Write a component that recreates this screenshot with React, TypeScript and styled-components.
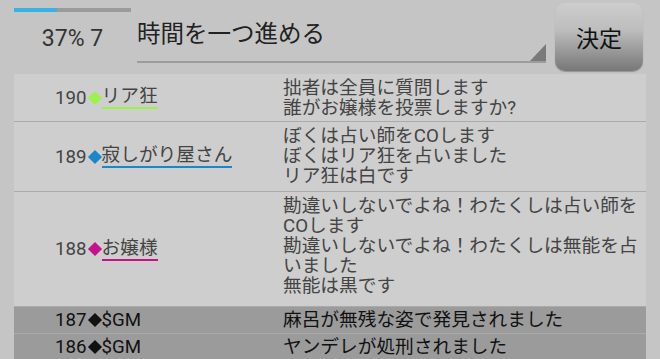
import React from 'react'
import styled, { createGlobalStyle } from 'styled-components'

interface Entry {
  no: number
  name: string
  color?: string
  lines: string[]
  h: number
  gm?: boolean
}

const entries: Entry[] = [
  {
    no: 190,
    name: 'リア狂',
    color: '#9cf24a',
    lines: ['拙者は全員に質問します', '誰がお嬢様を投票しますか?'],
    h: 47,
  },
  {
    no: 189,
    name: '寂しがり屋さん',
    color: '#1b87c9',
    lines: ['ぼくは占い師をCOします', 'ぼくはリア狂を占いました', 'リア狂は白です'],
    h: 70,
  },
  {
    no: 188,
    name: 'お嬢様',
    color: '#c8108a',
    lines: [
      '勘違いしないでよね！わたくしは占い師をCOします',
      '勘違いしないでよね！わたくしは無能を占いました',
      '無能は黒です',
    ],
    h: 115,
  },
  { no: 187, name: '$GM', lines: ['麻呂が無残な姿で発見されました'], h: 27, gm: true },
  { no: 186, name: '$GM', lines: ['ヤンデレが処刑されました'], h: 27, gm: true },
]

const GlobalStyle = createGlobalStyle`
  * { box-sizing: border-box; }
  body {
    margin: 0;
    background: #c5c5c5;
    font-family: Roboto, 'Noto Sans CJK JP', sans-serif;
  }
`

export default function App() {
  return (
    <>
      <GlobalStyle />
      <Screen>
        <Header>
          <Status>
            <Progress>
              <ProgressFill style={{ width: '37%' }} />
            </Progress>
            <StatusText>37% 7</StatusText>
          </Status>
          <Spinner>
            <SpinnerText>時間を一つ進める</SpinnerText>
            <SpinnerCorner />
          </Spinner>
          <DecideButton>決定</DecideButton>
        </Header>

        <LogList>
          {entries.map((e) => (
            <Row key={e.no} $gm={e.gm} $h={e.h}>
              <NameCell $gm={e.gm}>
                <span>{e.no}</span>
                <Diamond $color={e.color || '#111'} />
                <Name $color={e.color}>{e.name}</Name>
              </NameCell>
              <MessageCell $gm={e.gm}>
                {e.lines.map((l, i) => (
                  <div key={i}>{l}</div>
                ))}
              </MessageCell>
            </Row>
          ))}
        </LogList>
      </Screen>
    </>
  )
}

const Screen = styled.div`
  width: 660px;
  height: 359px;
  overflow: hidden;
  background: #c5c5c5;
`

const Header = styled.header`
  display: flex;
  height: 74px;
  padding-left: 14px;
`

const Status = styled.div`
  width: 117px;
  padding-top: 8px;
  display: flex;
  flex-direction: column;
  align-items: center;
`

const Progress = styled.div`
  width: 100%;
  height: 4px;
  background: #9b9b9b;
`

const ProgressFill = styled.div`
  height: 100%;
  background: #38b2e2;
`

const StatusText = styled.div`
  margin-top: 13px;
  font-size: 23px;
  line-height: 27px;
  color: #333;
`

const Spinner = styled.div`
  position: relative;
  width: 409px;
  height: 63px;
  margin-left: 6px;
  border-bottom: 2px solid #9c9c9c;
`

const SpinnerText = styled.div`
  padding-top: 20px;
  font-size: 23.5px;
  line-height: 28px;
  color: #222;
`

const SpinnerCorner = styled.div`
  position: absolute;
  right: 0;
  bottom: 0;
  width: 16px;
  height: 17px;
  background: #7a7a7a;
  clip-path: polygon(100% 0, 100% 100%, 0 100%);
`

const DecideButton = styled.button`
  width: 88px;
  height: 68px;
  margin: 3px 0 0 9px;
  border: none;
  border-radius: 10px;
  background: linear-gradient(to bottom, #cdcdcd 0%, #bdbdbd 40%, #777 100%);
  box-shadow: 0 1px 1px rgba(0, 0, 0, 0.25);
  font-family: inherit;
  font-size: 23px;
  color: #111;
  padding: 0;
`

const LogList = styled.div`
  margin: 0 14px;
`

const Row = styled.div<{ $gm?: boolean; $h: number }>`
  display: grid;
  grid-template-columns: 269px 1fr;
  min-height: ${(p) => p.$h}px;
  background: ${(p) => (p.$gm ? '#9b9b9b' : '#cecece')};
  font-size: 18.7px;
  line-height: 20px;

  & + & {
    border-top: 1px solid ${(p) => (p.$gm ? '#aaaaaa' : '#a9a9a9')};
  }
`

const NameCell = styled.div<{ $gm?: boolean }>`
  display: flex;
  align-items: center;
  padding-left: 41px;
  color: ${(p) => (p.$gm ? '#111' : '#444')};
`

const Diamond = styled.span<{ $color: string }>`
  display: inline-block;
  width: 10px;
  height: 10px;
  margin: 0 2px 0 3px;
  background: ${(p) => p.$color};
  transform: rotate(45deg);
`

const Name = styled.span<{ $color?: string }>`
  padding-bottom: 1px;
  border-bottom: 2px solid ${(p) => p.$color || 'transparent'};
  ${(p) => (p.$color ? '' : 'border-bottom: none; padding-bottom: 0;')}
`

const MessageCell = styled.div<{ $gm?: boolean }>`
  padding-top: ${(p) => (p.$gm ? 3 : 4)}px;
  color: ${(p) => (p.$gm ? '#111' : '#444')};
`
